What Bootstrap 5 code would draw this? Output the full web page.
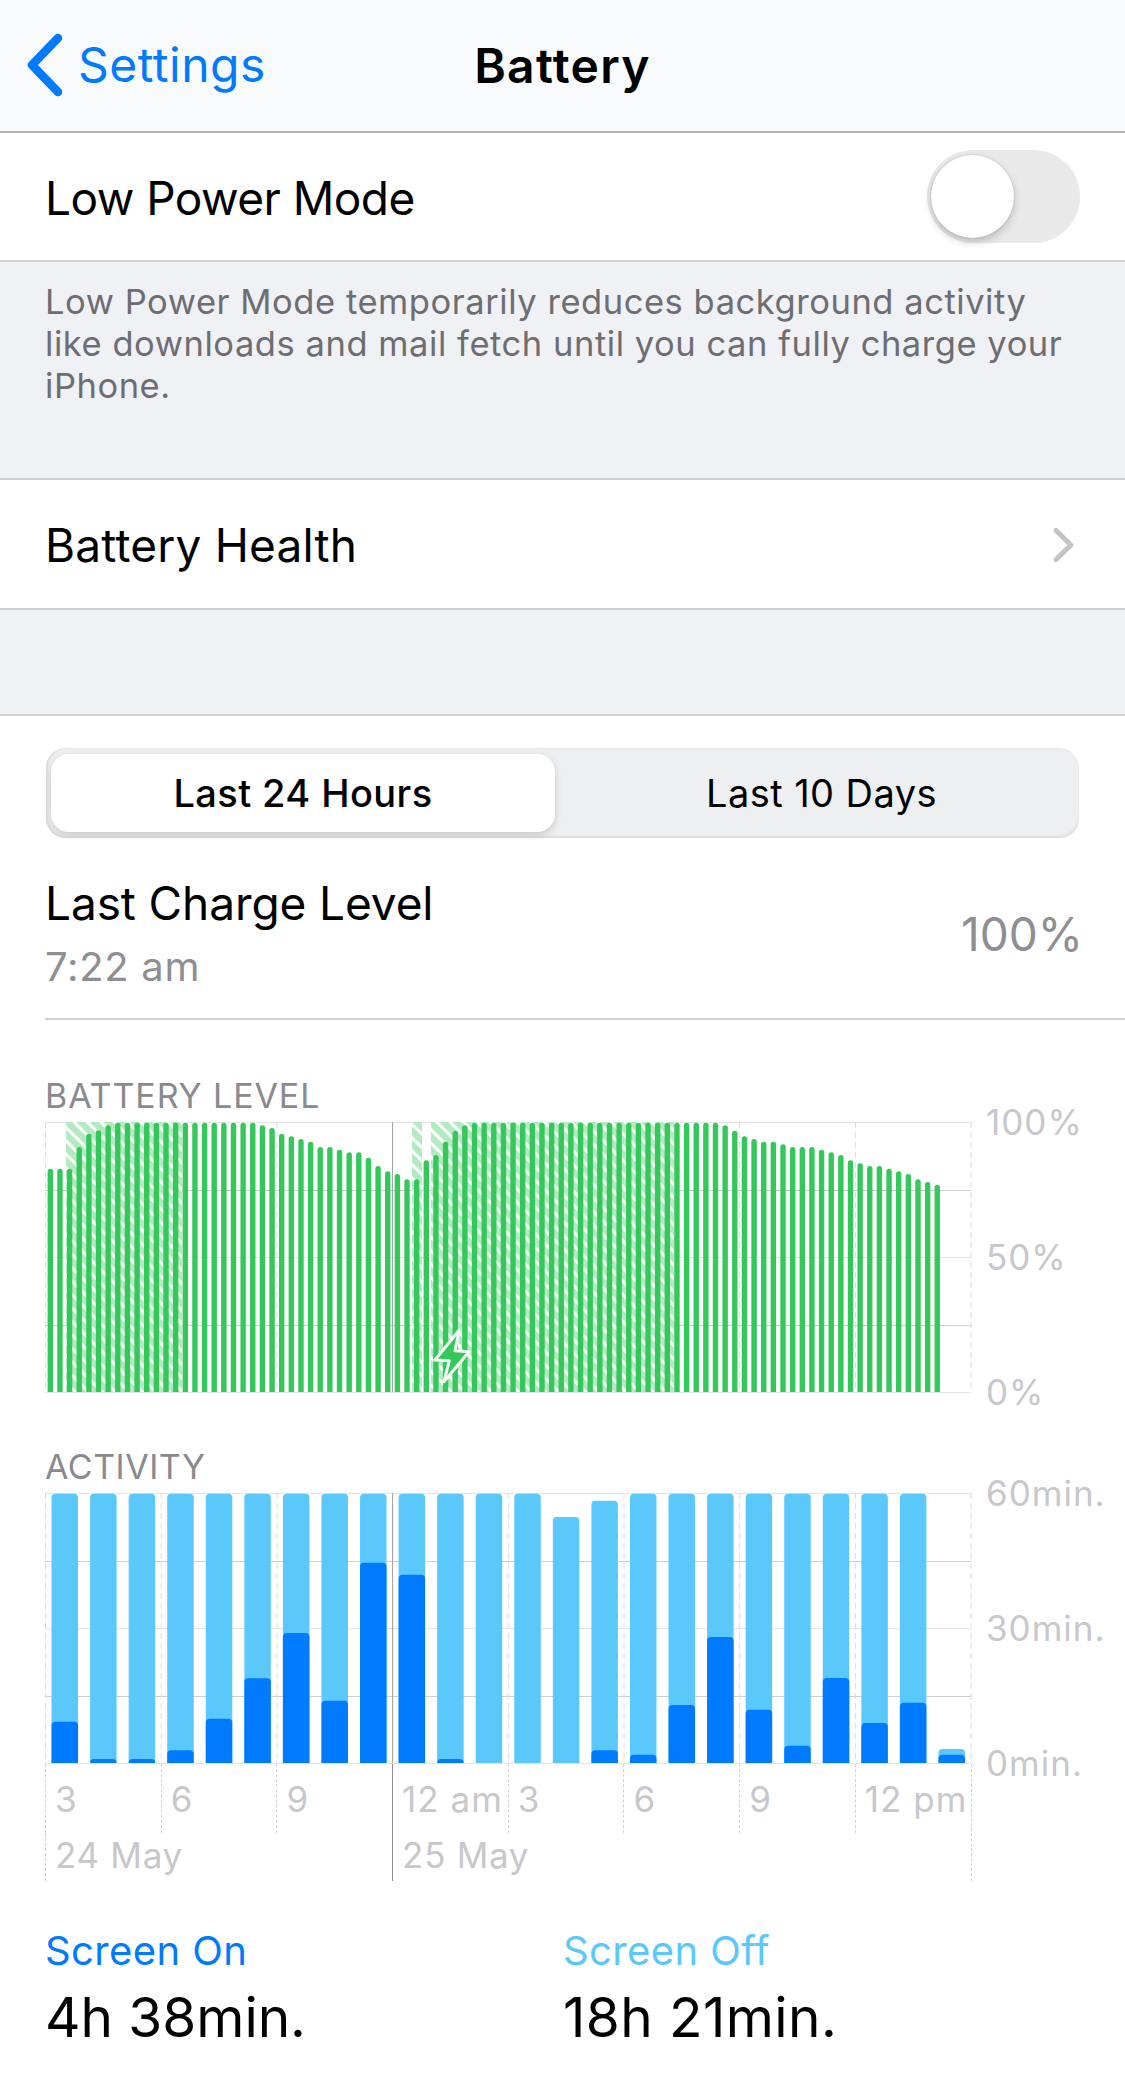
<!DOCTYPE html>
<html lang="en">
<head>
<meta charset="utf-8">
<title>Battery</title>
<link href="https://cdn.jsdelivr.net/npm/bootstrap@5.3.0/dist/css/bootstrap.min.css" rel="stylesheet">
<style>
html,body{margin:0;height:2086px;overflow:hidden}
body{font-family:Inter,"Liberation Sans",sans-serif;background:#fff;color:#000;--bs-border-color:#c8c7cc}
.ios-nav{height:133px;background:#f9fafc;border-bottom:2px solid #b2b2b2;padding:0}
.nav-back{color:#007aff;font-size:48px;line-height:54px;letter-spacing:.5px;text-decoration:none;padding-left:27px;gap:15px;margin-top:4px}
.nav-title{font-size:48px;line-height:54px;font-weight:600;letter-spacing:1.3px;text-align:center}
.cell-row{background:#fff;padding:0 45px;font-size:46px;line-height:54px}
.cell-one{height:129px;border-bottom:2px solid #d0d0d4;letter-spacing:-.54px}
.cell-one .cell-text{padding-top:2px}
.cell-two{height:132px;border-top:2px solid #d0d0d4;border-bottom:2px solid #d0d0d4;padding-top:2px;letter-spacing:.2px}
.chev-next{margin-right:4px}
.sec-foot{background:#f0f1f5;color:#6d6d72;padding:19px 45px 71px;font-size:34.5px;line-height:42px;letter-spacing:.55px;height:216px}
.sec-gap{height:106px;background:#f0f1f5;border-bottom:2px solid #d0d0d4}
.ios-toggle{width:153px;height:93px;border-radius:47px;background:#e9e9ea;position:relative}
.ios-toggle::after{content:"";position:absolute;left:4px;top:5px;width:83px;height:83px;border-radius:50%;background:#fff;box-shadow:0 4px 8px rgba(0,0,0,.2),0 0 0 1px rgba(0,0,0,.06)}
.seg-wrap{margin:32px 46px 0 46px;height:90px;background:#eeeff1;border-radius:20px;padding:6px 0 6px 5px;box-shadow:inset 0 -2px 2px #dcdcdf,inset 2px 0 2px #dcdcdf}
.seg-wrap .seg-btn{font-size:38px;line-height:46px;letter-spacing:.42px;color:#000;border:0;padding:0;background:transparent;border-radius:18px!important}
.seg-wrap .seg-on{flex:0 0 504px;background:#fff;font-weight:500;box-shadow:0 3px 7px rgba(0,0,0,.16)}
.seg-wrap .seg-off{flex:1 1 auto;padding-left:10px}
.charge-row{margin-left:45px;padding:39px 42px 28px 0;border-bottom:2px solid #d0d0d4;height:182px}
.charge-title{font-size:46px;line-height:54px;letter-spacing:-.1px}
.charge-sub{font-size:40px;line-height:48px;margin-top:13px;color:#8e8e93;letter-spacing:.7px}
.charge-val{font-size:46px;line-height:54px;color:#8e8e93}
.chart-head{margin:56px 0 6px 45px;font-size:34px;line-height:40px;color:#8a8a8e;letter-spacing:.9px}
.chart-head-b{margin-top:54px;letter-spacing:.5px}
.plot-line{margin-left:45px}
.plot-svg{display:block;flex:0 0 927px}
.y-col{margin:-17px 0 -17px 14px;font-size:35px;line-height:34px;color:#c7c7cc;letter-spacing:1px;height:304px}
.axis-row{margin-left:45px;width:927px;border-right:1px dashed #d1d1d6;height:117px}
.tick-cell{flex:0 0 115.7px;height:69px;border-left:1px dashed #d1d1d6;padding:15px 0 0 9px;font-size:35px;line-height:40px;color:#c7c7cc;letter-spacing:1px;white-space:nowrap}
.date-line .tick-cell{height:48px;padding-top:2px;letter-spacing:.7px}
.date-a{flex-basis:347.1px!important}
.tick-noon{border-left:1px solid #8e8e93}
.stat-row{margin:47px 0 0 45px}
.stat-cell{flex:0 0 518px}
.stat-label{font-size:40px;line-height:46px;letter-spacing:.4px}
.tone-on{color:#007aff}
.tone-off{color:#5ac8fa}
.stat-val{font-size:55px;line-height:64px;margin-top:11px;letter-spacing:-.05px}
.stat-wide{letter-spacing:.4px}
</style>
</head>
<body>
<nav class="navbar ios-nav flex-nowrap">
  <div class="row g-0 w-100 align-items-center">
    <div class="col-4">
      <a class="nav-back d-inline-flex align-items-center" href="#">
        <svg width="36" height="64" viewBox="0 0 36 64"><path d="M31 5 5 32 31 59" fill="none" stroke="#007aff" stroke-width="8.500" stroke-linecap="round" stroke-linejoin="round"/></svg>
        <span>Settings</span>
      </a>
    </div>
    <div class="col-4 nav-title">Battery</div>
    <div class="col-4"></div>
  </div>
</nav>

<div class="cell-row cell-one d-flex align-items-center justify-content-between">
  <span class="cell-text d-block">Low Power Mode</span>
  <div class="ios-toggle" role="switch" aria-checked="false"></div>
</div>
<div class="sec-foot">Low Power Mode temporarily reduces background activity like downloads and mail fetch until you can fully charge your iPhone.</div>
<div class="cell-row cell-two d-flex align-items-center justify-content-between">
  <span>Battery Health</span>
  <svg class="chev-next" width="24" height="38" viewBox="0 0 24 38"><path d="M4 4.500 19 19 4 33.500" fill="none" stroke="#c4c4c7" stroke-width="5" stroke-linecap="round" stroke-linejoin="round"/></svg>
</div>
<div class="sec-gap"></div>

<main>
  <div class="seg-wrap btn-group d-flex" role="group">
    <button type="button" class="btn seg-btn seg-on">Last 24 Hours</button>
    <button type="button" class="btn seg-btn seg-off">Last 10 Days</button>
  </div>

  <div class="charge-row d-flex justify-content-between align-items-center">
    <div>
      <div class="charge-title">Last Charge Level</div>
      <div class="charge-sub">7:22 am</div>
    </div>
    <div class="charge-val">100%</div>
  </div>

  <div class="chart-head">BATTERY LEVEL</div>
  <div class="plot-line d-flex">
    <svg id="batt" class="plot-svg" width="927" height="271" viewBox="0 0 927 271"></svg>
    <div class="y-col d-flex flex-column justify-content-between"><span>100%</span><span>50%</span><span>0%</span></div>
  </div>

  <div class="chart-head chart-head-b">ACTIVITY</div>
  <div class="plot-line d-flex">
    <svg id="act" class="plot-svg" width="927" height="271" viewBox="0 0 927 271"></svg>
    <div class="y-col d-flex flex-column justify-content-between"><span>60min.</span><span>30min.</span><span>0min.</span></div>
  </div>
  <div class="axis-row">
    <div class="d-flex">
      <div class="tick-cell">3</div><div class="tick-cell">6</div><div class="tick-cell">9</div><div class="tick-cell tick-noon">12 am</div><div class="tick-cell">3</div><div class="tick-cell">6</div><div class="tick-cell">9</div><div class="tick-cell">12 pm</div>
    </div>
    <div class="d-flex date-line">
      <div class="tick-cell date-a">24 May</div><div class="tick-cell tick-noon">25 May</div>
    </div>
  </div>

  <div class="stat-row d-flex">
    <div class="stat-cell"><div class="stat-label tone-on">Screen On</div><div class="stat-val">4h 38min.</div></div>
    <div class="stat-cell"><div class="stat-label tone-off">Screen Off</div><div class="stat-val stat-wide">18h 21min.</div></div>
  </div>
</main>

<script>
(function(){
  var P=115.7, X0=.5;
  function grid(){
    var s='';
    [0,1,2,3,4].forEach(function(k){
      var y=Math.round(k*67.5)+.5, c=(k==1||k==3)?'#cfcfd3':'#e4e4e7';
      s+='<line x1="0" x2="926" y1="'+y+'" y2="'+y+'" stroke="'+c+'" stroke-width="1.200"/>';
    });
    for(var i=0;i<=8;i++){
      var x=X0+i*P;
      if(i==3) s+='<line x1="'+x+'" x2="'+x+'" y1="0" y2="270" stroke="#9c9ca1" stroke-width="1"/>';
      else s+='<line x1="'+x+'" x2="'+x+'" y1="0" y2="270" stroke="#dcdce0" stroke-width="1" stroke-dasharray="6 4"/>';
    }
    return s;
  }
  /* battery: zoomed top-of-bar readings, 3 units per px */
  var tops=[295,295,295,230,190,180,165];
  for(var i=7;i<=21;i++)tops.push(157);
  tops=tops.concat([165,173,190,198,206,214,230,230,238,246,246,262,287,303,311,327,327,270,254,214,181,165]);
  for(i=44;i<=69;i++)tops.push(157);
  tops=tops.concat([165,181,198,206,214,214,222,230,230,230,238,246,254,270,279,287,287,295,303,311,327,335,343]);
  var s='<defs><pattern id="hatch" width="9.500" height="9.500" patternUnits="userSpaceOnUse" patternTransform="rotate(-45)"><rect width="9.500" height="9.500" fill="#b4eac2"/><rect width="3" height="9.500" fill="#fff"/></pattern></defs>'+grid();
  [[21,116],[367,10],[386,243]].forEach(function(r){
    s+='<rect x="'+r[0]+'" y="0" width="'+r[1]+'" height="270" fill="url(#hatch)"/>';
  });
  var pitch=925.5/96, w=5.4;
  tops.forEach(function(t,i){
    var x=.5+pitch*(i+.5)-w/2, h=(965-t)/3, y=270-h, r=w/2;
    s+='<path d="M'+x.toFixed(2)+' 270V'+(y+r).toFixed(2)+'a'+r+' '+r+' 0 0 1 '+w+' 0V270z" fill="#34c759"/>';
  });
  s+='<path d="M414.300 208 390 238 404.300 238.700 399 259.700 424 229.700 410 228.700z" fill="#34c759" stroke="#f2fcf5" stroke-width="3" stroke-linejoin="round"/>';
  document.getElementById('batt').innerHTML=s;

  /* activity */
  var dark=[846,958,958,932,837,716,580,783,369,405,958,970,970,970,932,945,796,592,810,918,715,850,789,945];
  var light=[];for(i=0;i<24;i++)light.push(162);light[13]=232;light[14]=183;light[23]=928;
  var a=grid(), bp=925.5/24, bw=26.500;
  function bar(x,h,c){
    var r=Math.min(4,h);
    return '<path d="M'+x.toFixed(2)+' 270V'+(270-h+r).toFixed(2)+'q0-'+r+' '+r+'-'+r+'h'+(bw-2*r)+'q'+r+' 0 '+r+' '+r+'V270z" fill="'+c+'"/>';
  }
  for(i=0;i<24;i++){
    var bx=.5+bp*(i+.5)-bw/2;
    a+=bar(bx,(970-light[i])/3,'#5ac8fa');
    if(dark[i]<970)a+=bar(bx,(970-dark[i])/3,'#007aff');
  }
  document.getElementById('act').innerHTML=a;
})();
</script>
<script src="https://cdn.jsdelivr.net/npm/bootstrap@5.3.0/dist/js/bootstrap.bundle.min.js"></script>
</body>
</html>
